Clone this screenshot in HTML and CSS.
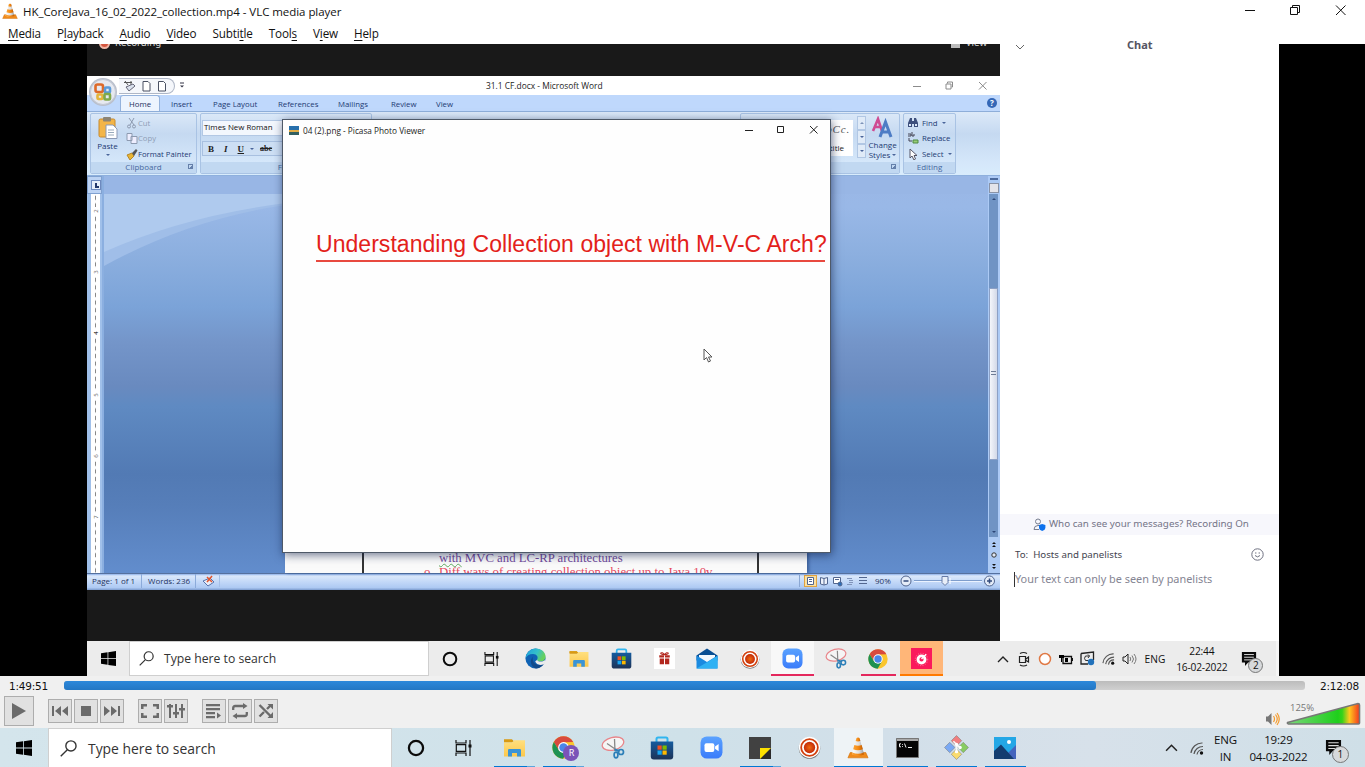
FILE: index.html
```html
<!DOCTYPE html>
<html lang="en">
<head>
<meta charset="utf-8">
<title>HK_CoreJava_16_02_2022_collection.mp4 - VLC media player</title>
<link rel="stylesheet" href="styles.css">
</head>
<body>
<svg class="defs" width="0" height="0">
  <defs>
    <linearGradient id="coneG"><stop offset="0" stop-color="#f9a43a"/><stop offset=".5" stop-color="#f58a12"/><stop offset="1" stop-color="#c95f00"/></linearGradient>
    <linearGradient id="coneW"><stop offset="0" stop-color="#fff"/><stop offset=".6" stop-color="#dcdcdc"/><stop offset="1" stop-color="#999"/></linearGradient>
    <linearGradient id="edgeA" x1="0" y1="0" x2="1" y2=".4"><stop offset="0" stop-color="#1e9de0"/><stop offset=".6" stop-color="#35c1c9"/><stop offset="1" stop-color="#66d05c"/></linearGradient>
    <linearGradient id="zoomG" x1="0" y1="0" x2="0" y2="1"><stop offset="0" stop-color="#5aa2ff"/><stop offset="1" stop-color="#3b7cfa"/></linearGradient>
    <linearGradient id="fold" x1="0" y1="0" x2="0" y2="1"><stop offset="0" stop-color="#ffdf7e"/><stop offset="1" stop-color="#fcc84c"/></linearGradient>
    <linearGradient id="storeG" x1="0" y1="0" x2="0" y2="1"><stop offset="0" stop-color="#155b9e"/><stop offset="1" stop-color="#1d3357"/></linearGradient>
    <radialGradient id="recG"><stop offset="0" stop-color="#f06a10"/><stop offset="1" stop-color="#c22a08"/></radialGradient>
    <linearGradient id="volG"><stop offset="0" stop-color="#7bd67b"/><stop offset=".7" stop-color="#1fcf1c"/><stop offset=".76" stop-color="#35d31a"/><stop offset=".86" stop-color="#ffc91e"/><stop offset="1" stop-color="#f4361e"/></linearGradient>
  </defs>
  <symbol id="cone" viewBox="0 0 24 24">
    <path d="M3.5 17.5h17L23 23.3H1z" fill="#f08a1a" stroke="#d06a00" stroke-width=".6"/>
    <path d="M10.4 1.6q1.6-1.2 3.2 0L18.6 19q-6.6 3-13.2 0z" fill="url(#coneW)"/>
    <path d="M10.4 1.6q1.6-1.2 3.2 0l1 3.4q-2.6 1-5.2 0z" fill="url(#coneG)"/>
    <path d="M8 9.4q4 1.4 8 0l1.3 4.6q-5.3 2-10.6 0z" fill="url(#coneG)"/>
    <path d="M5.9 17.4q6.1 3 12.2 0l.6 2.1q-6.7 3-13.4 0z" fill="url(#coneG)"/>
  </symbol>
  <symbol id="win" viewBox="0 0 16 16"><path d="M0 2.3 7 1.3V7.6H0zM7.8 1.2 16 0V7.6H7.8zM0 8.4H7V14.7L0 13.7zM7.8 8.4H16V16L7.8 14.8z"/></symbol>
  <symbol id="mag" viewBox="0 0 16 16"><g fill="none" stroke="currentColor" stroke-width="1.3"><circle cx="10.3" cy="5.6" r="4.8"/><path d="M6.9 9.2.7 15.4"/></g></symbol>
  <symbol id="ring" viewBox="0 0 16 16"><circle cx="8" cy="8" r="6.3" fill="none" stroke="#0b0b0b" stroke-width="2"/></symbol>
  <symbol id="tview" viewBox="0 0 17 16"><g fill="none" stroke="#111" stroke-width="1.2"><path d="M1 0v3h10V0M1 16v-3h10v3M1.3 4.600h9.400v6.800H1.300zM15 0v16"/></g><rect x="13.500" y="4.500" width="3" height="3" fill="#111"/></symbol>
  <symbol id="edge" viewBox="0 0 22 22"><circle cx="11" cy="11" r="10.500" fill="#0f62b4"/><path d="M.5 10.800C1.400 4.400 6 .5 11.200.5c6.300 0 10.600 4.400 10.300 8.800-.2 3.400-3 4.700-5.500 4.700-2.300 0-3.800-.9-3.400-1.800 1.700-2.700-.1-5.800-4.200-5.900C4.600 6.200 1.600 8.400.5 10.800z" fill="url(#edgeA)"/><path d="M8.500 9.200c-1.700 3.700 1.200 8.500 6.200 8.500 2.300 0 4.100-.7 5.400-1.700-1.300 2.600-4.300 5.200-8.400 5.500C6 19.800 4.200 12.700 8.500 9.200z" fill="#114a8b"/><path d="M13 12.200c-.5 1 1 2 3.500 2 2 0 3.800-.8 4.700-2.200V15l-1.500 2c-4 1.700-8 .5-9-3z" fill="#ececec"/></symbol>
  <symbol id="folder" viewBox="0 0 22 20"><path d="M.5 1.500h8l1.500 2h-9.500z" fill="#d99a12"/><path d="M.5 4.500 9 4.300l1.500-2h11V18.500H.5z" fill="url(#fold)"/><path d="M.5 1.500h8l1.500 1.500-1.500 1.300h-8z" fill="#d99a12"/><path d="M4.500 18.500v-6.300q0-1.200 1.200-1.200h10.600q1.200 0 1.200 1.200v6.300h-4v-3.500h-5v3.500z" fill="#3a94d6"/></symbol>
  <symbol id="store" viewBox="0 0 24 24"><path d="M6.500 6V3q0-1.500 1.500-1.500h8q1.500 0 1.500 1.500v3" fill="none" stroke="#31b5ef" stroke-width="2"/><path d="M.8 5.500h22.400V20.500q0 3-3 3H3.800q-3 0-3-3z" fill="url(#storeG)"/><path d="M7.500 9.500h4.200v4.200H7.500z" fill="#f25022"/><path d="M12.500 9.500h4.200v4.200h-4.200z" fill="#7fba00"/><path d="M7.500 14.500h4.200v4.200H7.500z" fill="#18a5f0"/><path d="M12.500 14.500h4.200v4.200h-4.200z" fill="#ffb900"/></symbol>
  <symbol id="gift" viewBox="0 0 22 22"><path d="M0 0h22v22H0z" fill="#fff"/><path d="M5.500 7.500h5v2.500h-5zM11.500 7.500h5v2.500h-5zM6 11h4.500v6H6zM11.500 11H16v6h-4.500z" fill="#b3271e"/><path d="M11 7Q7 7 7 5.300 8.500 4 11 7q2.500-3 4-1.700Q15 7 11 7z" fill="none" stroke="#b3271e" stroke-width="1.100"/></symbol>
  <symbol id="mail" viewBox="0 0 22 21"><path d="M.5 7.500 11 .5l10.500 7v5H.5z" fill="#0a4f93"/><path d="M3 7h16v8H3z" fill="#f4f9fd"/><path d="M.5 7.500 11 14l10.500-6.500v13H.5z" fill="#1b8ae0"/><path d="M.5 20.500 21.500 8v12.500z" fill="#2fb1f3"/></symbol>
  <symbol id="rec" viewBox="0 0 22 22"><circle cx="11" cy="11.500" r="10.300" fill="#777"/><circle cx="11" cy="10.800" r="10.200" fill="#fff"/><circle cx="11" cy="11" r="8" fill="#fff" stroke="#d2410f" stroke-width="1.700"/><circle cx="11" cy="11" r="5.400" fill="url(#recG)"/></symbol>
  <symbol id="zoom" viewBox="0 0 22 22"><rect x=".5" y=".5" width="21" height="21" rx="6" fill="url(#zoomG)"/><rect x="4.300" y="7" width="9.400" height="8.200" rx="1.800" fill="#fff"/><path d="m14.400 10 3.400-2.400v7L14.400 12.200z" fill="#fff"/></symbol>
  <symbol id="snip" viewBox="0 0 24 23"><g fill="none"><ellipse cx="12" cy="7.700" rx="11" ry="6.300" transform="rotate(-14 12 7.700)" fill="#f5f5f5" stroke="#e8858a" stroke-width="1.300"/><path d="M6 7.500 17 15M13.500 3 14 15" stroke="#888" stroke-width="1.300"/><circle cx="20" cy="16" r="2.500" stroke="#2d7fb8" stroke-width="1.700"/><ellipse cx="15" cy="19" rx="1.900" ry="2.800" stroke="#2d7fb8" stroke-width="1.700"/><path d="m13.500 13.500 5 1.500" stroke="#2d7fb8" stroke-width="2"/></g></symbol>
  <symbol id="chrome" viewBox="0 0 20 20"><circle cx="10" cy="10" r="9.700" fill="#fbc62d"/><path d="M1.600 5.150A9.700 9.700 0 0 1 18.400 5.150L10 5.400 6 12.300z" fill="#d94a3d"/><path d="M1.600 5.150A9.700 9.700 0 0 0 9.600 19.700L14 12.300 6 12.300z" fill="#1e9152"/><circle cx="10" cy="10" r="4.700" fill="#fff"/><circle cx="10" cy="10" r="3.700" fill="#4a86ea"/></symbol>
  <symbol id="dial" viewBox="0 0 22 22"><path d="M0 0h22v22H0z" fill="#fa1a5c"/><circle cx="11" cy="12" r="3.700" fill="none" stroke="#fff" stroke-width="3"/><path d="m11 11.500 5-5" stroke="#fff" stroke-width="1.500"/><circle cx="11" cy="12" r="6.500" fill="none" stroke="#fff" stroke-opacity=".6" stroke-width=".7" stroke-dasharray="1 1.600"/></symbol>
  <symbol id="sticky" viewBox="0 0 22 22"><path d="M0 0h22v22H0z" fill="#414141"/><path d="M22 11v11H11z" fill="#2a2a2a"/><path d="M11 11h11L11 22z" fill="#fde100"/></symbol>
  <symbol id="cmd" viewBox="0 0 23 20"><path d="M.5.5h22v19H.5z" fill="#050505" stroke="#777"/><path d="M1 1h21v2H1z" fill="#aaa"/><path d="M5 5.800H3.500v3H5M6.500 6v.8m0 1.400V9M8.500 5.500l1.500 4M12 9.500h4" stroke="#eee" fill="none"/></symbol>
  <symbol id="git" viewBox="0 0 24 24"><g stroke="#777" stroke-width=".5"><path d="m12 .5 5 5-5 5-5-5z" fill="#f17f80"/><path d="m5.500 7 5 5-5 5-5-5z" fill="#7aa9f4"/><path d="m18.500 7 5 5-5 5-5-5z" fill="#89cc62"/><path d="m12 13.500 5 5-5 5-5-5z" fill="#fadb6e"/></g><path d="m9 6 6 6M12 8v9" stroke="#f7f7f7" stroke-width="1.600"/><circle cx="12" cy="9" r="1.600" fill="#fff"/><circle cx="12" cy="16" r="1.600" fill="#fff"/><circle cx="15.500" cy="12" r="1.600" fill="#fff"/></symbol>
  <symbol id="photo" viewBox="0 0 22 22"><path d="M0 0h22v22H0z" fill="#23a7e6"/><path d="m22 8-9 9 5 5h4z" fill="#4464bd"/><path d="M0 14 7 7.500 20 22H0z" fill="#143d70"/><circle cx="15" cy="5" r="2" fill="#fff"/></symbol>
  <symbol id="wifi" viewBox="0 0 14 14"><g fill="none" stroke="#555" stroke-width="1.200"><path d="M1 12A11 11 0 0 1 12.500 2M4 13a9 9 0 0 1 9-7.500M7 13.500a6 6 0 0 1 6-5"/></g><circle cx="11.500" cy="12" r="1.700" fill="#111"/></symbol>
  <symbol id="note" viewBox="0 0 18 18"><path d="M1 1h16v12H8l-3.500 4V13H1z" fill="#0a0a0a"/><path d="M3.500 4h11M3.500 7h11M3.500 10h11" stroke="#ddd" stroke-width="1.100"/></symbol>
  <symbol id="up" viewBox="0 0 12 8"><path d="m1 7 5-5 5 5" fill="none" stroke="#222" stroke-width="1.400"/></symbol>
</svg>

<header class="titlebar">
  <svg class="i16"><use href="#cone"/></svg>
  <span class="app-title">HK_CoreJava_16_02_2022_collection.mp4 - VLC media player</span>
  <svg class="caption" width="115" height="20" viewBox="0 0 115 20" fill="none" stroke="#111"><path d="M6 10.500h10M51.500 7.500h7v7h-7zM53.500 7V5.500h7v7H59M97 5.500l9.500 9.500M106.500 5.500 97 15"/></svg>
</header>
<nav class="menu">
  <span><u>M</u>edia</span><span>P<u>l</u>ayback</span><span><u>A</u>udio</span><span><u>V</u>ideo</span><span>Subti<u>t</u>le</span><span>Tool<u>s</u></span><span>V<u>i</u>ew</span><span><u>H</u>elp</span>
</nav>

<main class="stage">
 <div class="video">
  <div class="meeting">
   <section class="share">
    <div class="zoombar">
      <i class="dot"></i><span class="zrec">Recording</span><i class="vico"></i><span class="zview">View</span>
    </div>
    <div class="word">
      <div class="wtitle">
        <svg class="office" width="30" height="30" viewBox="0 0 30 30"><circle cx="15" cy="15" r="14" fill="#b9bfcb"/><circle cx="15" cy="15" r="12.500" fill="#e6e9f0" stroke="#c3c9d5"/><g fill="none" stroke-width="2.600"><rect x="7.500" y="7.500" width="7.500" height="7.500" rx="2" stroke="#dd6a2a"/><rect x="17" y="10.500" width="5" height="5" rx="1" stroke="#5b9bd9"/><rect x="9.500" y="17.500" width="5" height="4.500" rx="1" stroke="#e5b53a"/><rect x="16.500" y="17" width="5.500" height="5.500" rx="1" stroke="#7fa84a"/></g></svg>
        <div class="qat"><svg width="52" height="14" viewBox="0 0 52 14"><path d="M2 3.500h8M3 2l3 4M9 2v4" stroke="#555"/><path d="m4 8 3 4 6-5-2-2z" fill="#dbe2ee" stroke="#667"/><path d="M21 2.500h5l2 2v7.500h-7zM36.500 2.500h5l2 2v7.500h-7z" fill="#fff" stroke="#4a5163"/></svg></div>
        <svg class="qdrop" width="6" height="7" viewBox="0 0 6 7"><path d="M1 1h4" stroke="#334"/><path d="M1 3.500h4L3 5.500z" fill="#334"/></svg>
        <span class="wname">31.1 CF.docx - Microsoft Word</span>
        <svg class="wcap" width="80" height="12" viewBox="0 0 80 12" fill="none" stroke="#8b8b8b"><path d="M1 6.500h8M34 4h5v5h-5zM35.500 3.500V2h5v5H39.500M67 2l7.500 7.500M74.500 2 67 9.500"/></svg>
      </div>
      <div class="wtabs"><span class="tab on">Home</span><span class="tab t2">Insert</span><span class="tab t3">Page Layout</span><span class="tab t4">References</span><span class="tab t5">Mailings</span><span class="tab t6">Review</span><span class="tab t7">View</span><i class="help">?</i></div>
      <div class="ribbon">
        <div class="group clip">
          <div class="gbody">
            <div class="paste"><svg width="20" height="22" viewBox="0 0 20 22"><rect x="1" y="2" width="16" height="18" rx="1.500" fill="#f3b548" stroke="#c78a2e"/><rect x="5" y="0" width="8" height="4.500" rx="1" fill="#8c8474"/><path d="M8 8h7l4 4v9.500H8z" fill="#fff" stroke="#8b99b5"/><path d="M10 13h6M10 15.500h6M10 18h6" stroke="#9ab"/></svg><span>Paste</span><b class="dd"></b></div>
            <div class="cmds">
              <div class="dim"><svg width="12" height="12" viewBox="0 0 12 12" fill="none" stroke="#8d9ab0"><path d="M3 1l5 7M8 1 4 8"/><circle cx="3" cy="9.500" r="1.500"/><circle cx="8" cy="9.500" r="1.500"/></svg><span>Cut</span></div>
              <div class="dim"><svg width="12" height="12" viewBox="0 0 12 12" fill="#eef" stroke="#8d9ab0"><path d="M1 1.500h5v7H1zM5 4.500h6v7H5z"/></svg><span>Copy</span></div>
              <div><svg width="12" height="12" viewBox="0 0 12 12"><path d="m1 7 5-2 2 3-4 4z" fill="#e9b634" stroke="#b5862a"/><path d="m6 5 4-4 1.500 1.500L8 8z" fill="#555"/></svg><span>Format Painter</span></div>
            </div>
          </div>
          <div class="gname"><span>Clipboard</span><i class="launch"></i></div>
        </div>
        <div class="group font">
          <div class="gbody fbody">
            <div class="fname">Times New Roman</div>
            <div class="fstyle"><b>B</b><em>I</em><u>U</u><i class="dd"></i><s>abc</s></div>
          </div>
          <div class="gname"><span>Font</span></div>
        </div>
        <div class="group styles">
          <div class="gbody sbody">
            <div class="swatch"><em>AaBbCc.</em><span>Subtitle</span></div>
            <div class="scrolls"><i><b class="uu"></b></i><i><b class="dd"></b></i><i><b class="dd more"></b></i></div>
            <div class="change"><svg width="23" height="24" viewBox="0 0 23 24" fill="none" stroke-width="2.600"><path d="M2 15 7 3l4 12M4 11h6" stroke="#cf4c93"/><path d="m9 21 5.500-15L20 21M11 16h7" stroke="#4d7cc5" stroke-width="3"/></svg><span>Change</span><span>Styles <b class="dd"></b></span></div>
          </div>
          <div class="gname"><i class="launch"></i></div>
        </div>
        <div class="group edit">
          <div class="gbody ebody">
            <div><svg width="12" height="12" viewBox="0 0 12 12" fill="#3d4f7c"><path d="M1 6 3 1h2v9H1zM7 1h2l2 5v4H7zM5 4h2v3H5z"/><path d="M2 7h2v2H2zM8 7h2v2H8z" fill="#dce8f8"/></svg><span>Find</span><b class="dd"></b></div>
            <div><svg width="12" height="12" viewBox="0 0 12 12" fill="none"><path d="M1 4h3v-2H1M5 0v4h2V2M2 6v3h3" stroke="#445"/><path d="M6 8h5v3H6z" stroke="#4e8a45" fill="#9c7"/></svg><span>Replace</span></div>
            <div><svg width="12" height="12" viewBox="0 0 12 12"><path d="M3 1v9l2-2 2 4 1.500-1L7 7.500h3z" fill="#fff" stroke="#556"/></svg><span>Select</span><b class="dd"></b></div>
          </div>
          <div class="gname"><span>Editing</span></div>
        </div>
      </div>
      <div class="doc">
        <div class="vruler">
          <div class="corner"><b></b></div>
          <div class="scale"><i></i><span>2</span><i></i><span>3</span><i></i><span class="dk">4</span><i></i><span>5</span><i></i><span>6</span><i></i><span>7</span><i></i></div>
        </div>
        <div class="canvas">
          <div class="band"></div>
          <svg class="swoosh" width="182" height="72" viewBox="0 0 182 72"><path d="M0 0h182v11Q85 25 0 72z" fill="#a0bee8"/><path d="M0 0h182v9Q80 22 0 58z" fill="#afcaee"/></svg>
          <div class="page">
            <div class="sheet"><p class="mvc"><span class="sq">with</span> MVC and LC-RP architectures</p><p class="diff"><span>o</span>Diff ways of creating collection object up to Java 10v</p></div>
          </div>
        </div>
        <div class="vscroll">
          <div class="split"></div><div class="rbtn"></div>
          <div class="track"><b class="uu"></b><div class="thumb"><i></i></div><b class="dd"></b></div>
          <div class="nav"><svg width="6" height="30" viewBox="0 0 6 30" fill="#111"><path d="M1 4l2-2 2 2zM1 7l2-2 2 2zM1 24h4l-2 2zM1 27h4l-2 2z"/><circle cx="3" cy="15" r="2.200" fill="#dfe8f5" stroke="#333"/></svg></div>
        </div>
      </div>
      <div class="status">
        <span class="s1">Page: 1 of 1</span><span class="s2">Words: 236</span>
        <span class="s3"><svg width="13" height="12" viewBox="0 0 13 12"><path d="m1 6 5 5 6-4-4-4z" fill="#e8edf8" stroke="#5572ad"/><path d="m5 2 5 5M10 1 5 7" stroke="#e2552c" stroke-width="1.500"/></svg></span>
        <div class="views"><svg width="66" height="12" viewBox="0 0 66 12" fill="none" stroke="#52668f"><rect x=".5" y=".5" width="12" height="11" fill="#fbe0a0" stroke="#dfa240"/><path d="M3.500 2.500h6v7h-6zM5 4.500h3M5 6.500h3" fill="#fff"/><path d="M16.500 2.500 20 3.500l3.500-1v6.500L20 10l-3.500-1zM20 3v7" fill="#edf2fb"/><path d="M29.500 2.500h7v6h-7zM31 4.500h4" fill="#fff"/><circle cx="36" cy="9" r="2" fill="#2a6db8"/><path d="M43 3.500h5M45 5.500h4M45 7.500h4M43 9.500h5" stroke="#8194ba"/><path d="M55 2.500h8M55 5.500h8M55 8.500h8"/></svg></div>
        <span class="pct">90%</span>
        <svg class="zslide" width="98" height="14" viewBox="0 0 98 14" fill="none"><path d="M17 7.500h68" stroke="#eaf2ff"/><path d="M17 6.500h68" stroke="#7e9dcc"/><circle cx="9" cy="7" r="5" fill="#e4ecf8" stroke="#51658f"/><path d="M6.500 7h5" stroke="#334b7c" stroke-width="1.500"/><path d="M45 2.500h6v6l-3 3-3-3z" fill="#e8eef8" stroke="#677ba6"/><path d="M53 4v6" stroke="#fff"/><circle cx="92.500" cy="7" r="5" fill="#e4ecf8" stroke="#51658f"/><path d="M90 7h5M92.500 4.500v5" stroke="#334b7c" stroke-width="1.500"/></svg>
      </div>
      <div class="picasa">
        <div class="ptitle"><svg width="10" height="9" viewBox="0 0 10 9"><path d="M0 0h10v4H0z" fill="#2870ac"/><path d="M0 4h10v3H0z" fill="#e2ad47"/><path d="M0 6h10v3H0z" fill="#315f61"/></svg><span>04 (2).png - Picasa Photo Viewer</span><svg class="pcap" width="76" height="12" viewBox="0 0 76 12" fill="none" stroke="#222"><path d="M1 6.500h8M33.500 2.500h6v6h-6zM66 2l7.500 7.500M73.500 2 66 9.500"/></svg></div>
        <h1>Understanding Collection object with M-V-C Arch?</h1>
        <svg class="pointer" width="10" height="15" viewBox="0 0 10 15"><path d="M1 1v11l2.500-2.500L5.500 14l2-1-2-4H9z" fill="#fff" stroke="#555"/></svg>
      </div>
    </div>
    <div class="zoomfoot"></div>
   </section>
   <aside class="chat">
    <div class="chead"><svg width="10" height="7" viewBox="0 0 10 7"><path d="m1 1 4 4 4-4" fill="none" stroke="#666"/></svg><b>Chat</b></div>
    <div class="who"><svg width="13" height="13" viewBox="0 0 13 13"><circle cx="5" cy="3.500" r="2.500" fill="none" stroke="#777e90"/><path d="M1 11.500q0-4 4-4h2M1 11.500h5" fill="none" stroke="#777e90"/><path d="M6 7l3.200-1 3.200 1v3q0 2-3.200 3Q6 12 6 10z" fill="#0e72ed"/></svg><span>Who can see your messages? Recording On</span></div>
    <div class="to"><span>To:</span><span>Hosts and panelists</span><svg width="13" height="13" viewBox="0 0 13 13" fill="none" stroke="#6e7080"><circle cx="6.500" cy="6.500" r="5.700"/><path d="M4 7.500q2.500 2.800 5 0M4.800 4.300v1.400M8.200 4.300v1.400"/></svg></div>
    <div class="input">Your text can only be seen by panelists</div>
   </aside>
  </div>
  <div class="tb1">
    <div class="st"><svg width="15" height="15"><use href="#win"/></svg></div>
    <div class="search"><svg width="15" height="15"><use href="#mag"/></svg><span>Type here to search</span></div>
    <div class="cell"><svg width="16" height="16"><use href="#ring"/></svg></div>
    <div class="cell tv"><svg width="15" height="14"><use href="#tview"/></svg></div>
    <div class="cell"><svg width="21" height="21"><use href="#edge"/></svg></div>
    <div class="cell"><svg width="20" height="18"><use href="#folder"/></svg></div>
    <div class="cell"><svg width="21" height="21"><use href="#store"/></svg></div>
    <div class="cell"><svg width="21" height="21"><use href="#gift"/></svg></div>
    <div class="cell"><svg width="22" height="21"><use href="#mail"/></svg></div>
    <div class="cell"><svg width="20" height="20"><use href="#rec"/></svg></div>
    <div class="cell lit"><svg width="21" height="21"><use href="#zoom"/></svg></div>
    <div class="cell"><svg width="22" height="21"><use href="#snip"/></svg></div>
    <div class="cell run"><svg width="20" height="20"><use href="#chrome"/></svg></div>
    <div class="cell alert"><svg width="21" height="21"><use href="#dial"/></svg></div>
    <div class="tray">
      <div class="slots">
      <svg width="12" height="8"><use href="#up"/></svg>
      <svg width="12" height="16" viewBox="0 0 12 16" fill="none" stroke="#222" stroke-width="1.200"><path d="M1.500 5.500h6v6h-6zM8 8l2.500-2v5L8 9.500M2 2.500q3.500-2 7 0M2 14q3.500 2 7 0"/></svg>
      <svg width="14" height="14" viewBox="0 0 14 14"><circle cx="7" cy="7" r="5.500" fill="#fff" stroke="#e07945" stroke-width="1.500"/></svg>
      <svg width="14" height="12" viewBox="0 0 14 12"><path d="M4 3.500h8.500v7H4zM13.500 5v3" fill="none" stroke="#111" stroke-width="1.300"/><path d="M6 5h3v4H6zM0 2h5v3H3v4H2V5H0z"/></svg>
      <svg width="15" height="15" viewBox="0 0 15 15"><path d="M1 2.500 13.500 1v8M1 2.500v10.500h7" fill="none" stroke="#222" stroke-width="1.300"/><path d="M9.500 5h-4q-2 2.500 0 4.500H8M8 3.500 9.500 5 8 7" fill="none" stroke="#333"/><circle cx="11" cy="11" r="3.200" fill="#2272bb"/></svg>
      <svg width="13" height="13"><use href="#wifi"/></svg>
      <svg width="15" height="12" viewBox="0 0 15 12" fill="none" stroke="#222"><path d="M1 4h2l3-3v10L3 8H1z"/><path d="M8 4q1.500 2 0 4M10 2.500q3 3.500 0 7M12 1q4 5 0 10" stroke="#777"/></svg>
      </div>
      <span class="eng">ENG</span>
      <div class="clock"><span>22:44</span><span>16-02-2022</span></div>
      <div class="act"><svg width="16" height="16"><use href="#note"/></svg><i>2</i></div>
    </div>
  </div>
 </div>
</main>

<section class="seek"><span>1:49:51</span><div class="rail"><div class="fill"></div></div><span class="total">2:12:08</span></section>
<section class="ctl">
  <div class="btn big"><svg width="14" height="18" viewBox="0 0 14 18"><path d="M0 1v16l14-8z"/></svg></div>
  <div class="set">
    <div class="btn"><svg width="16" height="12" viewBox="0 0 16 12"><path d="M0 1h2v10H0zM9 1v10L3 6zM16 1v10l-6-5z"/></svg></div>
    <div class="btn"><svg width="10" height="10" viewBox="0 0 10 10"><path d="M0 0h10v10H0z"/></svg></div>
    <div class="btn"><svg width="16" height="12" viewBox="0 0 16 12"><path d="M14 1h2v10h-2zM0 1v10l6-5zM7 1v10l6-5z"/></svg></div>
  </div>
  <div class="set">
    <div class="btn"><svg width="18" height="14" viewBox="0 0 18 14"><path d="M0 0h6v2.500H2.500V5H0zM12 0h6v5h-2.500V2.500H12zM0 9h2.500v2.500H6V14H0zM15.500 9H18v5h-6v-2.500h3.500z"/></svg></div>
    <div class="btn"><svg width="18" height="16" viewBox="0 0 18 16"><path d="M2 1h2v14H2zM8 1h2v14H8zM14 1h2v14h-2zM0 2h6v2.500H0zM6 9h6v2.500H6zM12 5h6v2.500h-6z"/></svg></div>
  </div>
  <div class="set">
    <div class="btn"><svg width="16" height="16" viewBox="0 0 16 16"><path d="M0 1h14v2.300H0zM0 5h14v2.300H0zM0 9h9v2.300H0zM0 13h9v2.300H0zM11 9.500v6l4-3z"/></svg></div>
    <div class="btn"><svg width="16" height="16" viewBox="0 0 16 16"><path d="M1.200 7V5q0-2 2-2H12M14.800 9v2q0 2-2 2H4" fill="none" stroke="#6b6b6b" stroke-width="2.300"/><path d="m11 0 4.500 3L11 6zM5 10 .5 13 5 16z"/></svg></div>
    <div class="btn"><svg width="16" height="16" viewBox="0 0 16 16"><path d="m1.500 2 11 11M1.500 13.500 6 9M9 6l4-4" fill="none" stroke="#6b6b6b" stroke-width="2.400"/><path d="M9.500 1H15v5.500zM9.500 15H15V9z"/></svg></div>
  </div>
  <div class="volume"><svg class="spk" width="16" height="14" viewBox="0 0 16 14"><path d="M1 4.500h2L6.500 1v12L3 9.500H1z" fill="#777"/><path d="M8.500 4q2 3 0 6M10.500 2.500q3.500 4.500 0 9M12 1q4.500 6 0 12" fill="none" stroke="#f39a2b" stroke-width="1.200"/></svg>
    <div class="wedge"><span>125%</span><svg width="75" height="24" viewBox="0 0 75 24"><path d="M1.500 20.500 72 1.500q1.500 0 1.500 1.500V21q0 1-1 1H2.500q-1.500-.5-1-1.500z" fill="url(#volG)" stroke="#777" stroke-width="1.600"/></svg></div></div>
</section>

<footer class="tb2">
  <div class="st"><svg width="16" height="16"><use href="#win"/></svg></div>
  <div class="search"><svg width="17" height="17"><use href="#mag"/></svg><span>Type here to search</span></div>
  <div class="cell sm"><svg width="18" height="18"><use href="#ring"/></svg></div>
  <div class="cell sm tv"><svg width="17" height="16"><use href="#tview"/></svg></div>
  <div class="cell run two"><svg width="23" height="20"><use href="#folder"/></svg></div>
  <div class="cell run two"><div class="prof"><svg width="23" height="23"><use href="#chrome"/></svg><i>R</i></div></div>
  <div class="cell"><svg width="24" height="23"><use href="#snip"/></svg></div>
  <div class="cell"><svg width="24" height="24"><use href="#store"/></svg></div>
  <div class="cell"><svg width="23" height="23"><use href="#zoom"/></svg></div>
  <div class="cell run two"><svg width="22" height="22"><use href="#sticky"/></svg></div>
  <div class="cell"><svg width="23" height="23"><use href="#rec"/></svg></div>
  <div class="cell lit"><svg width="22" height="23"><use href="#cone"/></svg></div>
  <div class="cell run"><svg width="23" height="20"><use href="#cmd"/></svg></div>
  <div class="cell run"><svg width="25" height="25"><use href="#git"/></svg></div>
  <div class="cell run"><svg width="22" height="22"><use href="#photo"/></svg></div>
  <div class="tray2">
    <svg width="13" height="9"><use href="#up"/></svg>
    <svg width="14" height="14"><use href="#wifi"/></svg>
    <div class="clock lang"><span>ENG</span><span>IN</span></div>
    <div class="clock date"><span>19:29</span><span>04-03-2022</span></div>
    <div class="act"><svg width="17" height="17"><use href="#note"/></svg><i>1</i></div>
  </div>
</footer>
</body>
</html>
```
FILE: styles.css
```css
* { box-sizing: border-box; }
body { margin: 0; width: 1365px; height: 767px; overflow: hidden; display: flex; flex-direction: column; background: #fff; color: #111; font-family: "Noto Sans", "Open Sans", sans-serif; font-size: 11px; }
svg { flex: none; display: block; }
.defs { position: absolute; }
span { white-space: nowrap; }
i { font-style: normal; }
p { margin: 0; }

.titlebar { height: 24px; flex: none; display: flex; align-items: center; padding-left: 2px; }
.i16 { width: 16px; height: 16px; margin-top: -2px; }
.app-title { margin-left: 5px; margin-top: -2px; font-family: "Open Sans", sans-serif; font-size: 11.5px; letter-spacing: -.05px; }
.caption { margin-left: auto; margin-right: 11px; margin-bottom: 4px; }
.menu { height: 20px; flex: none; display: flex; gap: 16px; padding-left: 8px; line-height: 19px; font-family: "Open Sans", sans-serif; font-size: 11.7px; letter-spacing: -.15px; }
.menu u { text-underline-offset: 2px; }

.stage { height: 632px; flex: none; background: #000; padding: 0 86px 0 87px; }
.video { height: 632px; display: flex; flex-direction: column; }
.meeting { height: 597px; display: flex; }
.share { width: 913px; display: flex; flex-direction: column; background: #191919; }
.zoombar { height: 32px; display: flex; padding: 0 13px 0 12px; color: #d8d8d8; overflow: hidden; }
.zoombar span { margin-top: -8px; line-height: 14px; height: 14px; font-size: 9.700px; }
.dot { width: 11px; height: 11px; border-radius: 50%; background: #d5563f; border: 2px solid #efb5a5; margin-top: -6px; }
.zrec { margin-left: 5px; }
.vico { width: 9px; height: 8px; background: #bbb; margin: -4px 6px 0 auto; }
.word { position: relative; height: 514px; display: flex; flex-direction: column; font-family: "Open Sans", sans-serif; font-size: 8px; color: #223a73; }
.zoomfoot { height: 51px; }

.wtitle { height: 19px; background: #fff; display: flex; align-items: center; position: relative; }
.office { position: relative; z-index: 2; margin: 13px 0 0 1px; }
.qat { width: 56px; height: 16px; margin-left: 1px; border: 1px solid #aeb6c6; border-left: 0; border-radius: 0 8px 8px 0; background: #f5f7fb; padding-left: 3px; }
.qdrop { margin-left: 4px; }
.wname { margin-left: 301px; color: #222; font-size: 8.400px; }
.wcap { margin-left: auto; margin-right: 8px; }
.wtabs { height: 16px; background: #bfd8fc; display: flex; align-items: center; padding-left: 33px; }
.tab { line-height: 16px; font-size: 7.800px; padding-top: 1px; }
.tab.on { width: 40px; height: 17px; text-align: center; border: 1px solid #94b2dc; border-bottom: 0; border-radius: 3px 3px 0 0; background: #edf4fe; color: #1c2f60; padding-top: 0; }
.t2 { margin-left: 11px; width: 42px; }
.t3 { width: 65px; }
.t4 { width: 60px; }
.t5 { width: 53px; }
.t6 { width: 45px; }
.help { width: 10px; height: 10px; border-radius: 50%; background: #3467b7; color: #fff; font: bold 8px/10px "Open Sans", sans-serif; text-align: center; margin-left: auto; margin-right: 3px; }
.ribbon { height: 65px; display: flex; padding: 1px 0 2px 3px; background: linear-gradient(#dce9f8, #c5d9f1 35%, #d5e7fa 80%, #d8ecfc); border-top: 1px solid #8eaed9; border-bottom: 1px solid #8eb0dd; }
.group { display: flex; flex: none; flex-direction: column; border: 1px solid #a9c3e4; border-radius: 2px; height: 61px; overflow: hidden; }
.gbody { height: 48px; display: flex; }
.gname { height: 11px; background: #c1d8f1; display: flex; align-items: center; justify-content: center; position: relative; color: #4668a0; line-height: 10px; }
.gname span { margin-top: -1px; }
.launch { position: absolute; right: 3px; top: 2px; width: 5px; height: 5px; border-left: 1px solid #6580aa; border-top: 1px solid #6580aa; background: linear-gradient(135deg, transparent 50%, #6580aa 50%); }
.dd, .uu { display: inline-block; width: 0; height: 0; border: 2px solid transparent; border-top-color: #4a659a; border-bottom: 0; vertical-align: middle; }
.uu { border-top: 0; border-bottom: 2px solid #7d93b8; }
.clip { width: 107px; margin-right: 3px; }
.paste { width: 33px; display: flex; flex-direction: column; align-items: center; padding-top: 3px; line-height: 14px; }
.paste .dd { margin-top: 1px; }
.cmds { margin-left: 2px; padding-top: 1px; }
.cmds div, .ebody div { display: flex; align-items: center; gap: 1px; height: 15.500px; }
.cmds span { font-size: 7.700px; margin-left: -1px; }
.cmds .dim { color: #8f9db5; }
.font { width: 172px; }
.fbody { flex-direction: column; padding: 6px 1px 0; }
.fname { background: #f3f7fd; border: 1px solid #b3c8e4; height: 16px; line-height: 13px; padding-left: 1px; color: #111; font-size: 7.900px; }
.fstyle { display: flex; align-items: center; height: 15px; margin-top: 5px; border: 1px solid #a8c0e0; background: #cddff4; color: #222; font: bold 9px "Liberation Serif", serif; padding-left: 5px; gap: 10px; }
.fstyle .dd { margin: 0 -4px; }
.fstyle s { font-size: 8px; }
.styles { margin-left: 368px; width: 160px; }
.sbody { padding-left: 74px; }
.swatch { width: 50px; height: 36px; margin: 6px 4px 0 -12px; background: #fff; display: flex; flex: none; flex-direction: column; align-items: flex-end; justify-content: space-around; padding-right: 3px; color: #555; }
.swatch em { font-size: 11px; font-family: "Liberation Serif", serif; letter-spacing: .8px; }
.swatch span { padding-right: 6px; color: #222; }
.scrolls { width: 10px; margin-top: 2px; }
.scrolls i { display: flex; align-items: center; justify-content: center; height: 14px; border: 1px solid #b1c7e4; background: #e0ebf8; }
.more { box-shadow: 0 -2px 0 -1px #4a659a; }
.change { width: 36px; display: flex; flex-direction: column; align-items: center; padding-top: 2px; line-height: 9.500px; }
.edit { width: 53px; margin-left: 3px; }
.ebody { flex-direction: column; padding: 1px 0 0 3px; }
.ebody span { margin-left: 2px; font-size: 7.800px; }
.ebody .dd { margin-left: 3px; }

.doc { height: 397px; display: flex; background: linear-gradient(#9ab7e6, #99b8e7 8%, #8cafdf 20%, #7ba3d8 33%, #7495c9 42%, #698abf 53%, #5f8ac2 58%, #527ab4 75%, #567eb9 83%, #628dcd); }
.vruler { width: 17px; background: #a0c0ea; border-right: 2px solid #8bafe0; display: flex; flex-direction: column; }
.corner { height: 18px; border: 1px solid #80a1d0; background: #bcd3f4; padding: 3px; }
.corner b { display: block; width: 10px; height: 10px; border: 1px solid #6e8abf; background: linear-gradient(#25396b, #25396b) 3px 2px / 2px 5px no-repeat, linear-gradient(#25396b, #25396b) 3px 5px / 4px 2px no-repeat, #e7effb; }
.scale { flex: 1; width: 9px; margin-left: 4px; background: #fff; display: flex; flex-direction: column; align-items: center; overflow: hidden; }
.scale span { height: 8px; line-height: 8px; font-size: 6px; color: #666; transform: rotate(-90deg); }
.scale .dk { color: #000; }
.scale i { width: 3px; height: 53.200px; flex: none; background: radial-gradient(#888 .7px, transparent 1px) 0 0 / 3px 7.600px; }
.scale i:first-child { height: 13px; }
.canvas { flex: 1; position: relative; display: flex; flex-direction: column; }
.band { height: 18px; background: #98b6e5; }
.swoosh { height: 72px; }
.page { margin: auto 181px 0 181px; width: 522px; height: 21px; background: #fafafa; padding: 0 48px 0 77px; overflow: hidden; box-shadow: 2px 0 3px #3c5f99; }
.sheet { height: 21px; border: solid #333; border-width: 0 2px; padding-left: 75px; font: 12.750px/14px "Liberation Serif", serif; color: #71499b; overflow: hidden; white-space: nowrap; }
.mvc { margin-top: -1px; }
.sq { text-decoration: underline wavy #60a860 1px; }
.diff { color: #e5455d; margin-left: -15px; }
.diff span { display: inline-block; width: 15px; }
.vscroll { width: 13px; background: #accaf5; display: flex; flex-direction: column; align-items: center; padding-right: 1px; }
.split { width: 8px; height: 2px; background: #4b6a9d; margin-top: 2px; }
.rbtn { width: 10px; height: 10px; border: 1px solid #8a93a6; background: #e4e4ea; margin-top: 3px; }
.track { width: 9px; height: 343px; margin-top: 1px; background: #7094c4; display: flex; flex-direction: column; align-items: center; padding: 4px 0; }
.track .uu { border-bottom-color: #2c4678; }
.track .dd { border-top-color: #2c4678; }
.thumb { width: 9px; height: 172px; margin: 88px 0 auto; border: 1px solid #8ca0c5; background: linear-gradient(90deg, #f4f6fb, #d3d9e8); display: flex; align-items: center; justify-content: center; }
.thumb i { width: 5px; height: 6px; background: repeating-linear-gradient(#6d7b95 0 1px, transparent 1px 3px); }
.nav { flex: 1; display: flex; align-items: center; }

.status { height: 17px; display: flex; align-items: center; background: linear-gradient(#8db0e8, #dbe8fb 12%, #c2d8f8 50%, #aecaf3 85%, #7c9bce); color: #1f3360; border-top: 1px solid #55719f; font-size: 8px; line-height: 14px; padding-bottom: 2px; }
.s1 { width: 55px; padding-left: 5px; border-right: 1px solid #8cabda; }
.s2 { width: 54px; padding-left: 6px; border-right: 1px solid #8cabda; }
.s3 { width: 24px; padding-left: 6px; border-right: 1px solid #a5c0e8; }
.views { margin-left: auto; border-left: 1px solid #8aa7d3; padding-left: 4px; }
.pct { width: 22px; margin-left: 5px; }
.zslide { margin-right: 5px; }

.picasa { position: absolute; left: 195px; top: 43px; width: 549px; height: 434px; background: #fefefe; border: 1px solid #4e5968; box-shadow: 1px 2px 9px rgba(15, 30, 70, .6); display: flex; flex-direction: column; }
.ptitle { height: 20px; display: flex; align-items: center; padding-left: 6px; color: #222; }
.ptitle span { margin-left: 4px; font-size: 8.250px; }
.pcap { margin-left: auto; margin-right: 10px; }
h1 { margin: 90px 0 0 33px; width: 509px; height: 32px; border-bottom: 2px solid #e8493f; font: 23px/28px "Liberation Sans", Arial, sans-serif; letter-spacing: .04px; color: #e3211a; white-space: nowrap; }
.pointer { margin: 86px 0 0 420px; }

.chat { width: 279px; background: #fff; display: flex; flex-direction: column; color: #555563; }
.chead { height: 20px; display: flex; padding-left: 15px; }
.chead b { margin-left: 102px; margin-top: -7px; font-size: 11px; line-height: 16px; height: 16px; }
.who { height: 21px; margin-top: 450px; background: #f7f7fc; display: flex; align-items: center; padding-left: 33px; color: #747487; font-size: 9.800px; }
.who span { margin: -2px 0 0 3px; }
.to { height: 15px; margin-top: 12px; display: flex; align-items: center; padding: 0 15px; color: #44444f; font-size: 9.700px; }
.to span + span { margin-left: 5px; }
.to svg { margin-left: auto; }
.input { margin: 10px 0 0 14px; height: 15px; line-height: 14px; border-left: 1px solid #333; color: #858593; font-size: 10.900px; white-space: nowrap; }

.st { display: flex; align-items: center; justify-content: center; }
.search { display: flex; align-items: center; background: #fff; border: 1px solid #cfcfcf; color: #333; font-family: "Open Sans", sans-serif; }
.cell { display: flex; align-items: center; justify-content: center; position: relative; }
.tv { padding-right: 3px; }
.tb1 { height: 35px; display: flex; background: #ececec; }
.tb1 .st { width: 42px; }
.tb1 .search { width: 300px; padding-left: 9px; font-size: 12.200px; }
.tb1 .search span { margin-left: 10px; }
.tb1 .cell { width: 42.800px; }
.tb1 .cell.lit { background: #f8f8f8; }
.tb1 .cell.alert { background: #ffb678; }
.tb1 .lit::after, .tb1 .run::after, .tb1 .alert::after { content: ""; position: absolute; left: 0; right: 0; bottom: 0; height: 2px; background: #e4285d; }
.tb1 .run::after { left: 4px; right: 4px; }
.tb1 .alert::after { background: #ff7a00; }
.tray { flex: 1; display: flex; align-items: center; padding-left: 50px; border-right: 3px solid #f5f5f5; font-family: "Open Sans", sans-serif; }
.slots { display: grid; grid-template-columns: repeat(7, 21px); align-items: center; justify-items: center; }
.eng { margin-left: 5px; font-size: 10.200px; }
.clock { display: flex; flex-direction: column; align-items: center; }
.tray .clock { margin-left: 11px; font-size: 10.200px; line-height: 16px; letter-spacing: -.2px; width: 51px; }
.act { position: relative; }
.act i { position: absolute; border: 1px solid #777; background: #d7d9db; border-radius: 50%; width: 15px; height: 15px; left: 7px; top: 7px; font-size: 10px; line-height: 13px; text-align: center; }
.tray .act { margin-left: 14px; }

.seek { height: 18px; flex: none; display: flex; align-items: center; background: #f0f0f0; padding-left: 9px; font-family: "DejaVu Sans", sans-serif; font-size: 10.500px; letter-spacing: -.2px; }
.seek span { width: 55px; line-height: 18px; padding-top: 2px; }
.rail { width: 1241px; height: 9px; border-radius: 3px; background: linear-gradient(#bcbcbc, #d0d0d0); }
.seek .total { margin-left: 15px; width: 42px; }
.fill { width: 1032px; height: 9px; border-radius: 3px; background: linear-gradient(#2d88da, #2477c4); }
.ctl { height: 34px; flex: none; display: flex; align-items: center; background: #f0f0f0; padding-left: 4px; gap: 14px; }
.set { display: flex; gap: 2px; }
.btn { width: 24px; height: 24px; border: 1px solid #adadad; background: #e1e1e1; display: flex; align-items: center; justify-content: center; }
.btn svg { fill: #6b6b6b; }
.big { width: 30px; height: 30px; }
.volume { margin-left: auto; display: flex; align-items: flex-end; height: 34px; padding: 0 4px 2px 0; gap: 5px; }
.wedge { position: relative; }
.wedge span { position: absolute; left: 4px; top: 0; font: 9.500px/12px "Open Sans", sans-serif; color: #777; z-index: 1; }

.tb2 { height: 39px; flex: none; display: flex; background: linear-gradient(90deg, #d4e5ec, #cfe1e9 50%, #d2dfe9 65%, #d7e1ea 80%, #cfdfe7); }
.tb2 .st { width: 48px; }
.tb2 .search { width: 344px; padding-left: 11px; font-size: 13.900px; border-width: 1px 1px 0; }
.tb2 .search span { margin-left: 11px; }
.tb2 .cell { width: 49.050px; }
.tb2 .cell.sm { width: 48.700px; }
.tb2 .cell.sm + .cell:not(.sm) { margin-left: 1px; }
.tb2 .lit { background: #eef3f6; }
.tb2 .lit::after, .tb2 .run::after { content: ""; position: absolute; left: 4px; right: 4px; bottom: 0; height: 1px; background: #0078d4; }
.tb2 .lit::after { left: 0; right: 0; }
.tb2 .two::after { background: linear-gradient(90deg, #0078d4 80%, #5ca6dd 80%); }
.prof { position: relative; }
.prof i { position: absolute; left: 11px; top: 9px; width: 16px; height: 16px; border-radius: 50%; background: #7b53b8; color: #fff; font-size: 9px; line-height: 16px; text-align: center; }
.tray2 { flex: 1; display: flex; align-items: center; padding-left: 135px; font-family: "Open Sans", sans-serif; }
.tray2 svg + svg { margin-left: 12px; }
.tray2 .clock { font-size: 11.500px; line-height: 17px; letter-spacing: -.2px; }
.lang { margin-left: 9px; width: 25px; }
.date { margin-left: 11px; width: 59px; }
.tray2 .act { margin-left: 17px; }
.tray2 .act i { width: 17px; height: 17px; left: 7px; top: 7px; line-height: 15px; }
```
